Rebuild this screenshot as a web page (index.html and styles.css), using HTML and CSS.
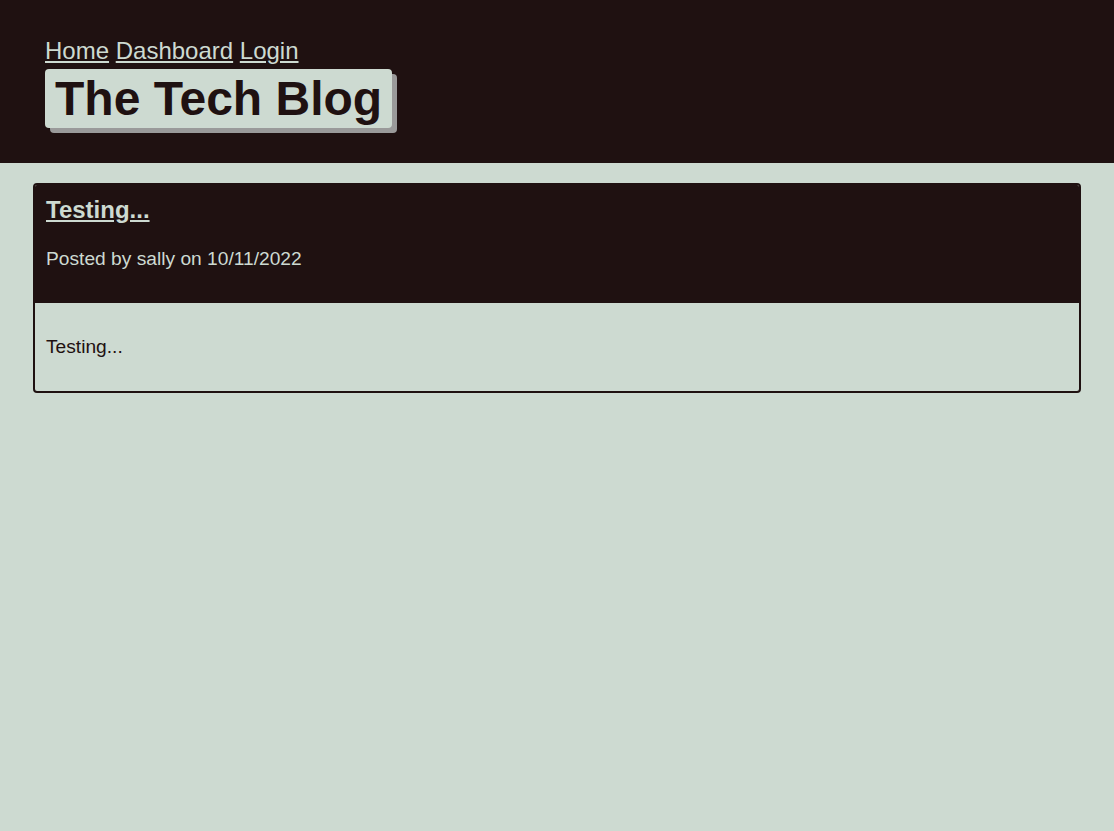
FILE: index.html
```html
<!DOCTYPE html>
<html lang="en">
<head>
<meta charset="utf-8">
<title>The Tech Blog</title>
<link rel="stylesheet" href="styles.css">
</head>
<body>
<header class="site-header">
  <nav class="nav">
    <a href="#">Home</a>
    <a href="#">Dashboard</a>
    <a href="#">Login</a>
  </nav>
  <h1 class="brand">The Tech Blog</h1>
</header>
<main class="content">
  <article class="post">
    <div class="post-head">
      <h2 class="post-title"><a href="#">Testing...</a></h2>
      <p class="post-meta">Posted by sally on 10/11/2022</p>
    </div>
    <div class="post-body">
      <p>Testing...</p>
    </div>
  </article>
</main>
</body>
</html>
```
FILE: styles.css
```css
html, body {
  margin: 0;
  padding: 0;
}
body {
  background: #cddad1;
  font-family: "Liberation Sans", Arial, Helvetica, sans-serif;
  color: #1f1111;
  min-height: 100vh;
}
.site-header {
  background: #1f1111;
  padding: 37px 45px 35px;
  display: flex;
  flex-direction: column;
  align-items: flex-start;
}
.nav {
  font-size: 24px;
  margin-bottom: 4px;
}
.nav a {
  color: #cddad1;
  text-decoration: underline;
}
.brand {
  margin: 0;
  font-size: 48px;
  font-weight: bold;
  background: #cddad1;
  color: #1f1111;
  padding: 2px 10px;
  border-radius: 4px;
  box-shadow: 5px 5px 0 #9a9a9a;
}
.content {
  padding: 20px 33px;
}
.post {
  border: 2px solid #1f1111;
  border-radius: 4px;
  overflow: hidden;
}
.post-head {
  background: #1f1111;
  color: #cddad1;
  padding: 11px 11px 33px;
}
.post-title {
  margin: 0;
  font-size: 24px;
  font-weight: bold;
}
.post-title a {
  color: #cddad1;
}
.post-meta {
  margin: 24px 0 0;
  font-size: 19.2px;
}
.post-body {
  padding: 33px 11px 33px;
  font-size: 19.2px;
}
.post-body p {
  margin: 0;
}
```
